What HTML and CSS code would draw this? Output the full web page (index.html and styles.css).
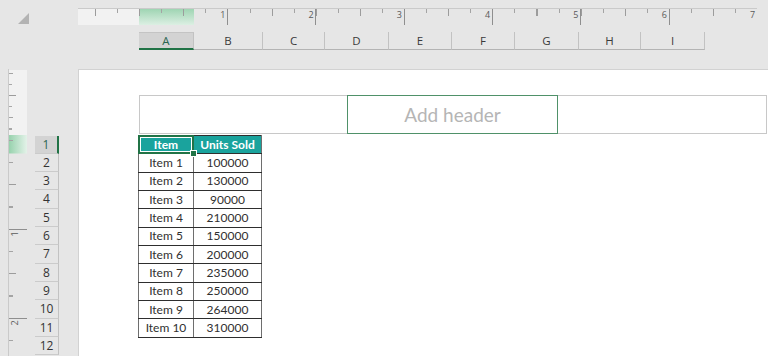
FILE: index.html
```html
<!DOCTYPE html>
<html>
<head>
<meta charset="utf-8">
<link rel="stylesheet" href="styles.css">
</head>
<body>
<div class="app">
  <div class="corner">
    <svg width="11" height="11" viewBox="0 0 11 11"><polygon points="11,0 11,11 0,11" fill="#b3b3b3"/></svg>
  </div>
  <div class="topright">
    <div class="hruler">
      <div class="hr-spacer"></div>
      <div class="hr-inch">1</div>
      <div class="hr-inch">2</div>
      <div class="hr-inch">3</div>
      <div class="hr-inch">4</div>
      <div class="hr-inch">5</div>
      <div class="hr-inch">6</div>
      <div class="hr-inch">7</div>
    </div>
    <div class="colheads">
      <div class="ch ch-sel w55">A</div>
      <div class="ch w69">B</div>
      <div class="ch w62">C</div>
      <div class="ch w64">D</div>
      <div class="ch w63">E</div>
      <div class="ch w63">F</div>
      <div class="ch w64">G</div>
      <div class="ch w62">H</div>
      <div class="ch w64">I</div>
    </div>
  </div>
  <div class="leftcol">
    <div class="vruler">
      <div class="vr-spacer"></div>
      <div class="vr-inch"><span class="vlabel">1</span></div>
      <div class="vr-inch vr-last"><span class="vlabel">2</span></div>
    </div>
    <div class="rowheads">
      <div class="rh rh-sel">1</div>
      <div class="rh">2</div>
      <div class="rh">3</div>
      <div class="rh">4</div>
      <div class="rh">5</div>
      <div class="rh">6</div>
      <div class="rh">7</div>
      <div class="rh">8</div>
      <div class="rh">9</div>
      <div class="rh">10</div>
      <div class="rh">11</div>
      <div class="rh">12</div>
    </div>
  </div>
  <div class="page">
    <div class="hbox">
      <div class="hb-l"></div>
      <div class="hb-c">Add header</div>
      <div class="hb-r"></div>
    </div>
    <table class="data">
      <colgroup><col class="c1"><col class="c2"></colgroup>
      <tr class="head"><td class="sel">Item</td><td>Units Sold</td></tr>
      <tr><td>Item 1</td><td>100000</td></tr>
      <tr><td>Item 2</td><td>130000</td></tr>
      <tr><td>Item 3</td><td>90000</td></tr>
      <tr><td>Item 4</td><td>210000</td></tr>
      <tr><td>Item 5</td><td>150000</td></tr>
      <tr><td>Item 6</td><td>200000</td></tr>
      <tr><td>Item 7</td><td>235000</td></tr>
      <tr><td>Item 8</td><td>250000</td></tr>
      <tr><td>Item 9</td><td>264000</td></tr>
      <tr><td>Item 10</td><td>310000</td></tr>
    </table>
  </div>
</div>
</body>
</html>
```

FILE: styles.css
```css
html, body {
  margin: 0;
  padding: 0;
  overflow: hidden;
}
body {
  width: 768px;
  height: 356px;
  background: #e6e6e6;
  font-family: "Open Sans", "Noto Sans", sans-serif;
  color: #333;
}
.app {
  display: grid;
  grid-template-columns: 78px 690px;
  grid-template-rows: 69px 287px;
  height: 356px;
  overflow: hidden;
}
.corner {
  padding: 13px 0 0 18px;
}
.corner svg {
  display: block;
}
.topright {
  display: flex;
  flex-direction: column;
  padding-top: 8px;
}
.hruler {
  box-sizing: border-box;
  width: 679px;
  height: 17px;
  border-top: 1px solid #cacaca;
  display: flex;
  background:
    repeating-linear-gradient(to right, #8f8f8f 0 1px, transparent 1px 88.3px) 149.3px 0 / 100% 100% no-repeat,
    repeating-linear-gradient(to right, #9c9c9c 0 1px, transparent 1px 44.15px) 16.85px 0 / 100% 7px no-repeat,
    repeating-linear-gradient(to right, #a4a4a4 0 1px, transparent 1px 22.075px) 16.85px 0 / 100% 4px no-repeat,
    linear-gradient(to bottom, #9fd5b3, #dcefe3) 61px 0 / 55px 100% no-repeat,
    linear-gradient(#f2f2f2, #f2f2f2) 0 0 / 61px 100% no-repeat;
}
.hr-spacer {
  flex: none;
  width: 61px;
}
.hr-inch {
  flex: none;
  width: 88.3px;
  box-sizing: border-box;
  text-align: right;
  padding-right: 2px;
  padding-top: 1px;
  font-size: 9px;
  line-height: 10px;
  color: #5a5a5a;
}
.colheads {
  display: flex;
  margin-top: 7px;
  margin-left: 61px;
  height: 18px;
}
.ch {
  box-sizing: border-box;
  height: 18px;
  border-right: 1px solid #c2c2c2;
  border-bottom: 1px solid #b4b4b4;
  text-align: center;
  font-size: 11.5px;
  line-height: 17px;
  color: #3a3a3a;
}
.ch-sel {
  background: #d3d3d3;
  border-top: 1px solid #c4c4c4;
  border-bottom: 2px solid #217346;
  line-height: 15px;
  color: #2b6650;
}
.w55 { width: 55px; }
.w62 { width: 62px; }
.w63 { width: 63px; }
.w64 { width: 64px; }
.w69 { width: 69px; }

.leftcol {
  display: flex;
  padding-left: 8px;
  overflow: hidden;
}
.vruler {
  box-sizing: border-box;
  width: 19px;
  height: 287px;
  overflow: hidden;
  border-left: 1px solid #cacaca;
  display: flex;
  flex-direction: column;
  background:
    repeating-linear-gradient(to bottom, #8f8f8f 0 1px, transparent 1px 89px) 0 160px / 100% 100% no-repeat,
    repeating-linear-gradient(to bottom, #9c9c9c 0 1px, transparent 1px 89px) 0 26px / 7px 100% no-repeat,
    repeating-linear-gradient(to bottom, #a4a4a4 0 1px, transparent 1px 22.25px) 0 3.75px / 4px 100% no-repeat,
    repeating-linear-gradient(to bottom, #a8a8a8 0 1px, transparent 1px 11.125px) 0 14.875px / 3px 50px no-repeat,
    linear-gradient(to right, #97d2ad, #e4f2e9) 0 66px / 100% 18.5px no-repeat,
    linear-gradient(#f2f2f2, #f2f2f2) 0 1px / 100% 65px no-repeat;
}
.vr-spacer {
  flex: none;
  height: 161px;
}
.vr-inch {
  flex: none;
  height: 89px;
  padding-left: 2px;
}
.vr-last {
  height: 37px;
}
.vlabel {
  display: block;
  width: 8px;
  height: 8px;
  font-size: 9px;
  line-height: 8px;
  text-align: center;
  color: #5a5a5a;
  transform: rotate(-90deg);
}
.rowheads {
  margin-left: 8px;
  width: 24px;
  padding-top: 66.5px;
  display: flex;
  flex-direction: column;
}
.rh {
  flex: none;
  box-sizing: border-box;
  height: 18.33px;
  border-bottom: 1px solid #cbcbcb;
  border-right: 1px solid #c2c2c2;
  text-align: center;
  font-size: 12px;
  line-height: 17px;
  color: #333;
}
.rh-sel {
  background: #d3d3d3;
  border-right: 2px solid #217346;
  color: #2b6650;
}

.page {
  box-sizing: border-box;
  background: #fff;
  border-top: 1px solid #d2d2d2;
  border-left: 1px solid #d2d2d2;
  padding: 25px 0 0 60px;
  overflow: hidden;
}
.hbox {
  display: flex;
  height: 39px;
}
.hb-l, .hb-c, .hb-r {
  box-sizing: border-box;
  height: 39px;
}
.hb-l {
  width: 208px;
  border: 1px solid #c8c8c8;
  border-right: none;
}
.hb-c {
  width: 211px;
  border: 1px solid #4f9169;
  display: flex;
  align-items: center;
  justify-content: center;
  font-family: "Lato", sans-serif;
  font-size: 19px;
  color: #b5b5b5;
}
.hb-r {
  width: 209px;
  border: 1px solid #c8c8c8;
  border-left: none;
}
.data {
  margin-top: 1px;
  margin-left: -1px;
  border-collapse: collapse;
  table-layout: fixed;
  width: 123px;
  font-family: "Lato", sans-serif;
  font-size: 12px;
}
.c1 { width: 55px; }
.c2 { width: 68px; }
.data tr {
  height: 18.33px;
}
.data td {
  border-top: 1px solid #2e2e2e;
  border-bottom: 1px solid #2e2e2e;
  border-left: 1px solid #6e6e6e;
  border-right: 1px solid #6e6e6e;
  padding: 0;
  text-align: center;
  line-height: 16px;
  color: #303030;
}
.data .head td {
  background: #1aa39d;
  color: #fff;
  font-weight: bold;
}
.data td.sel {
  position: relative;
}
.data td.sel::after {
  content: "";
  position: absolute;
  left: -1px;
  top: -1px;
  right: -1px;
  bottom: -1px;
  border: 2px solid #217346;
  box-shadow: inset 0 0 0 1px #fff;
}
.data td.sel::before {
  content: "";
  position: absolute;
  right: -4px;
  bottom: -4px;
  width: 5px;
  height: 5px;
  background: #217346;
  border: 1px solid #fff;
  z-index: 2;
}
```
